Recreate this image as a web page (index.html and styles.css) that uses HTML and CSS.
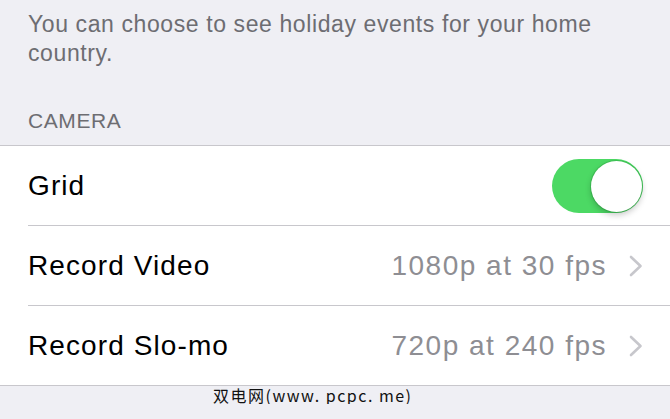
FILE: index.html
```html
<!DOCTYPE html>
<html>
<head>
<meta charset="utf-8">
<link rel="stylesheet" href="styles.css">
</head>
<body>
<div class="note">You can choose to see holiday events for your home country.</div>
<div class="section-header">CAMERA</div>
<div class="group">
  <div class="row">
    <div class="row-inner">
      <span class="label">Grid</span>
      <div class="toggle"><div class="knob"></div></div>
    </div>
  </div>
  <div class="row">
    <div class="row-inner">
      <span class="label">Record Video</span>
      <span class="value">1080p at 30 fps</span>
      <svg class="chevron" width="14" height="22" viewBox="0 0 14 22"><polyline points="2,2 11.5,11 2,20" fill="none" stroke="#c7c7cc" stroke-width="2.6" stroke-linecap="round" stroke-linejoin="round"/></svg>
    </div>
  </div>
  <div class="row last">
    <div class="row-inner">
      <span class="label">Record Slo-mo</span>
      <span class="value">720p at 240 fps</span>
      <svg class="chevron" width="14" height="22" viewBox="0 0 14 22"><polyline points="2,2 11.5,11 2,20" fill="none" stroke="#c7c7cc" stroke-width="2.6" stroke-linecap="round" stroke-linejoin="round"/></svg>
    </div>
  </div>
</div>
<div class="watermark">双电网(www. pcpc. me)</div>
</body>
</html>
```

FILE: styles.css
```css
html, body {
  margin: 0;
  padding: 0;
  background: #efeff4;
  font-family: "Liberation Sans", Arial, sans-serif;
  overflow: hidden;
}
.note {
  padding: 10px 28px 0 28px;
  font-size: 23px;
  line-height: 29px;
  color: #6d6d72;
  letter-spacing: 0.6px;
  width: 580px;
}
.section-header {
  margin-top: 41px;
  padding: 0 28px 12px 28px;
  font-size: 21px;
  line-height: 24px;
  color: #6d6d72;
  letter-spacing: 0.6px;
}
.group {
  background: #fff;
  border-top: 1px solid #c8c7cc;
  border-bottom: 1px solid #c8c7cc;
}
.row {
  padding-left: 28px;
}
.row-inner {
  display: flex;
  align-items: center;
  height: 79px;
  border-bottom: 1px solid #c8c7cc;
  padding-right: 27px;
}
.row.last .row-inner {
  border-bottom: none;
  height: 79px;
}
.label {
  flex: 1;
  font-size: 28px;
  line-height: 32px;
  color: #000;
  letter-spacing: 1.1px;
}
.value {
  font-size: 28px;
  line-height: 32px;
  color: #8e8e93;
  letter-spacing: 1.5px;
  margin-right: 22px;
}
.chevron {
  display: block;
}
.toggle {
  position: relative;
  width: 91px;
  height: 54px;
  border-radius: 27px;
  background: #4cd964;
}
.knob {
  position: absolute;
  right: 1px;
  top: 2px;
  width: 51px;
  height: 51px;
  border-radius: 50%;
  background: #fff;
  box-shadow: 0 3px 6px rgba(0,0,0,0.22), 0 0 0 1px rgba(40,160,60,0.35);
}
.watermark {
  margin-left: 213px;
  margin-top: 0;
  font-family: "Noto Sans CJK SC", "Liberation Sans", sans-serif;
  font-size: 16px;
  line-height: 18px;
  color: #111;
  letter-spacing: 1.5px;
}
```
